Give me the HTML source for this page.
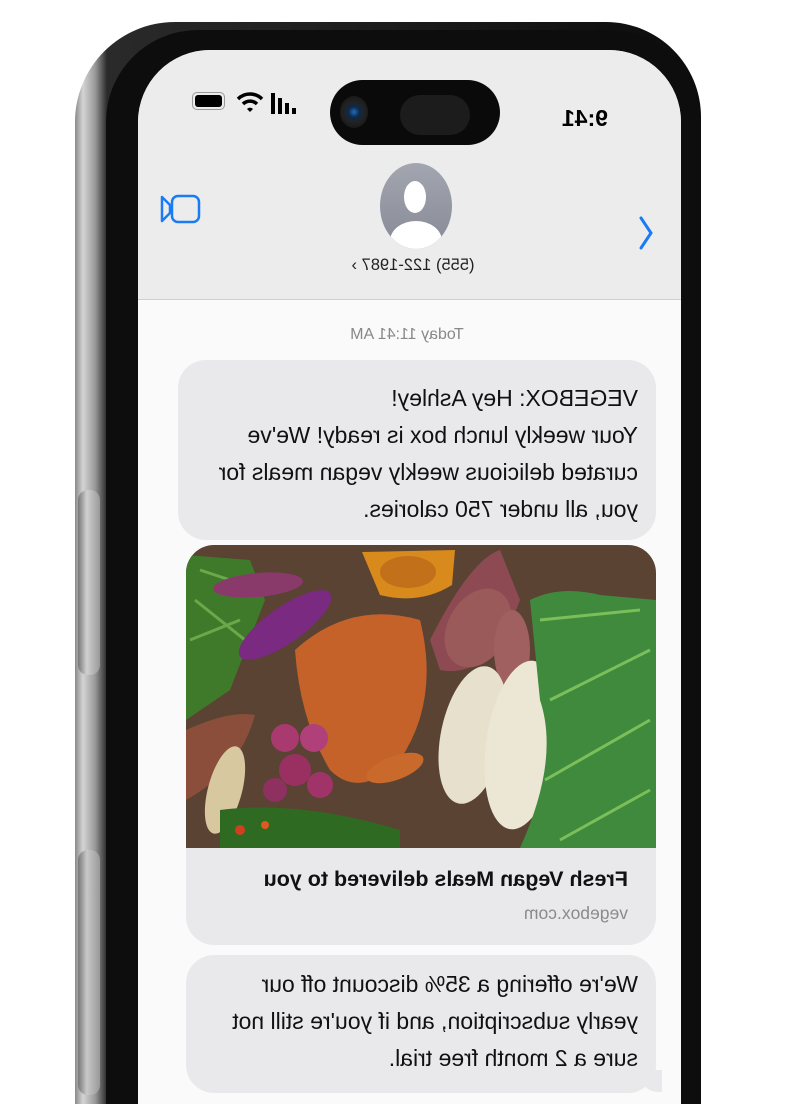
<!DOCTYPE html>
<html><head><meta charset="utf-8"><style>
*{margin:0;padding:0;box-sizing:border-box}
html,body{width:798px;height:1104px;background:#fff;overflow:hidden;font-family:"Liberation Sans",Arial,sans-serif}
#w{position:relative;width:798px;height:1104px;overflow:hidden}
.a{position:absolute}
.m{transform:scaleX(-1);white-space:nowrap}
.bub{background:#e9e9eb;border-radius:28px}
.t{font-size:23px;line-height:37px;color:#111;text-align:left}
</style></head><body><div id="w">
<div class="a" style="left:75px;top:22px;width:626px;height:1200px;border-radius:100px 95px 0 0;background:linear-gradient(90deg,#8a8a8a 0,#d4d4d4 8px,#9a9a9a 20px,#2a2a2a 32px,#0c0c0c 100%)"></div>
<div class="a" style="left:106px;top:30px;width:594px;height:1200px;border-radius:92px 92px 0 0;background:#0d0d0d"></div>
<div class="a" style="left:78px;top:490px;width:22px;height:185px;border-radius:10px;background:linear-gradient(90deg,#777,#d0d0d0 40%,#999)"></div>
<div class="a" style="left:78px;top:850px;width:22px;height:245px;border-radius:10px;background:linear-gradient(90deg,#777,#c8c8c8 40%,#999)"></div>
<div class="a" style="left:138px;top:50px;width:543px;height:1200px;border-radius:72px 72px 0 0;background:#fafafa;overflow:hidden">
 <div class="a" style="left:0;top:0;width:543px;height:250px;background:#ececec;border-bottom:1px solid #cfcfcf"></div>
</div>
<div class="a" style="left:330px;top:80px;width:170px;height:65px;border-radius:33px;background:#0a0a0a"></div>
<div class="a" style="left:400px;top:95px;width:70px;height:40px;border-radius:20px;background:#1c1c1c"></div>
<div class="a" style="left:340px;top:96px;width:28px;height:32px;border-radius:50%;background:radial-gradient(circle,#1f6fbf 0,#0d2a4a 25%,#222 50%,#111 100%)"></div>
<div class="a m" style="left:556px;top:105px;font-size:23px;font-weight:bold;color:#000;width:52px">9:41</div>
<div class="a" style="left:192px;top:92px;width:33px;height:18px;border:1.5px solid #999;border-radius:5px;padding:2px"><div style="width:100%;height:100%;background:#000;border-radius:3px"></div></div>
<svg class="a" style="left:236px;top:90px" width="28" height="24" viewBox="0 0 28 24"><path d="M2 9 A17 17 0 0 1 26 9" stroke="#000" stroke-width="3.5" fill="none"/><path d="M7 14 A10 10 0 0 1 21 14" stroke="#000" stroke-width="3.5" fill="none"/><path d="M11 19 L14 22 L17 19 A4 4 0 0 0 11 19Z" fill="#000"/></svg>
<svg class="a" style="left:271px;top:93px" width="28" height="22"><rect x="0" y="0" width="4" height="21" fill="#000"/><rect x="7" y="5" width="4" height="16" fill="#000"/><rect x="14" y="10" width="4" height="11" fill="#000"/><rect x="21" y="15" width="4" height="6" fill="#000"/></svg>
<svg class="a" style="left:160px;top:192px" width="42" height="34"><path d="M2 5 L10 13 L10 21 L2 29 Z" stroke="#1a7cf5" stroke-width="2.5" fill="none" stroke-linejoin="round"/><rect x="12" y="4" width="27" height="26" rx="6" stroke="#1a7cf5" stroke-width="2.5" fill="none"/></svg>
<svg class="a" style="left:636px;top:215px" width="20" height="36"><path d="M5 3 L15 18 L5 33" stroke="#1a7cf5" stroke-width="3" fill="none" stroke-linecap="round"/></svg>
<div class="a" style="left:380px;top:163px;width:72px;height:86px;border-radius:50%;background:linear-gradient(#a3a6b0,#868a96);overflow:hidden">
 <div class="a" style="left:24px;top:18px;width:22px;height:32px;border-radius:50%;background:#fff"></div>
 <div class="a" style="left:10px;top:58px;width:52px;height:40px;border-radius:50%;background:#fff"></div>
</div>
<div class="a m" style="left:313px;top:256px;width:200px;text-align:center;font-size:16.5px;color:#222">(555) 122-1987 ›</div>
<div class="a m" style="left:307px;top:326px;width:200px;text-align:center;font-size:16px;color:#888">Today 11:41 AM</div>
<div class="a bub" style="left:178px;top:360px;width:478px;height:180px"></div>
<div class="a m t" style="left:178px;top:380px;width:478px;padding-left:18px">VEGEBOX: Hey Ashley!<br>Your weekly lunch box is ready! We've<br>curated delicious weekly vegan meals for<br>you, all under 750 calories.</div>
<div class="a" style="left:186px;top:545px;width:470px;height:400px;border-radius:28px;background:#e9e9eb;overflow:hidden">
<svg width="470" height="303" viewBox="186 545 470 303">
<rect x="186" y="545" width="470" height="303" fill="#5a4333"/>
<path d="M186 555 L250 560 L265 600 L230 690 L186 720Z" fill="#3f7a2a"/>
<path d="M200 570 L260 590 M195 600 L245 640 M190 640 L240 620" stroke="#6aa84a" stroke-width="3"/>
<ellipse cx="258" cy="585" rx="45" ry="12" fill="#8a3a6a" transform="rotate(-5 258 585)"/>
<ellipse cx="285" cy="625" rx="55" ry="18" fill="#7a2a80" transform="rotate(-35 285 625)"/>
<path d="M362 552 L455 550 L452 585 Q420 605 380 595Z" fill="#d98a1c"/>
<ellipse cx="408" cy="572" rx="28" ry="16" fill="#c2701a"/>
<path d="M295 650 Q350 600 420 620 Q440 700 400 760 Q360 800 330 770 Q300 720 295 650Z" fill="#c4622a"/>
<ellipse cx="395" cy="768" rx="30" ry="12" fill="#c96a2c" transform="rotate(-20 395 768)"/>
<path d="M430 640 Q470 560 500 550 L520 600 Q490 680 440 670Z" fill="#8d4a52"/>
<ellipse cx="478" cy="628" rx="30" ry="42" fill="#9a5a5a" transform="rotate(30 478 628)"/>
<ellipse cx="512" cy="650" rx="18" ry="40" fill="#a06060"/>
<ellipse cx="473" cy="735" rx="32" ry="70" fill="#e6e0cc" transform="rotate(12 473 735)"/>
<ellipse cx="522" cy="745" rx="36" ry="85" fill="#ece6d4" transform="rotate(8 522 745)"/>
<path d="M530 600 Q560 585 600 595 L656 600 L656 848 L520 848 Q560 760 540 700Z" fill="#3f8a3c"/>
<path d="M540 620 L640 610 M550 700 L650 650 M545 780 L650 720 M560 840 L650 790" stroke="#7bbf5a" stroke-width="3"/>
<circle cx="285" cy="738" r="14" fill="#a83a70"/><circle cx="314" cy="738" r="14" fill="#b0407a"/>
<circle cx="295" cy="770" r="16" fill="#9a3062"/><circle cx="320" cy="785" r="13" fill="#a03468"/><circle cx="275" cy="790" r="12" fill="#8e3060"/>
<path d="M186 730 Q230 710 255 715 Q240 770 186 800Z" fill="#8a4e3a"/>
<ellipse cx="225" cy="790" rx="17" ry="45" fill="#d8c8a0" transform="rotate(15 225 790)"/>
<path d="M220 810 Q300 800 400 830 L400 848 L220 848Z" fill="#2f6a22"/>
<circle cx="240" cy="830" r="5" fill="#d04020"/><circle cx="265" cy="825" r="4" fill="#e05a20"/>
</svg>
<div class="a m" style="left:0;top:322px;width:470px;padding-left:28px;font-size:21.5px;font-weight:bold;color:#111">Fresh Vegan Meals delivered to you</div>
<div class="a m" style="left:0;top:358px;width:470px;padding-left:28px;font-size:17.5px;color:#8a8a8e">vegebox.com</div>
</div>
<div class="a bub" style="left:186px;top:955px;width:470px;height:138px"></div>
<div class="a" style="left:640px;top:1070px;width:22px;height:22px;background:#e9e9eb;border-radius:0 0 0 18px"></div>
<div class="a m t" style="left:186px;top:966px;width:470px;padding-left:18px">We're offering a 35% discount off our<br>yearly subscription, and if you're still not<br>sure a 2 month free trial.</div>
</div></body></html>
